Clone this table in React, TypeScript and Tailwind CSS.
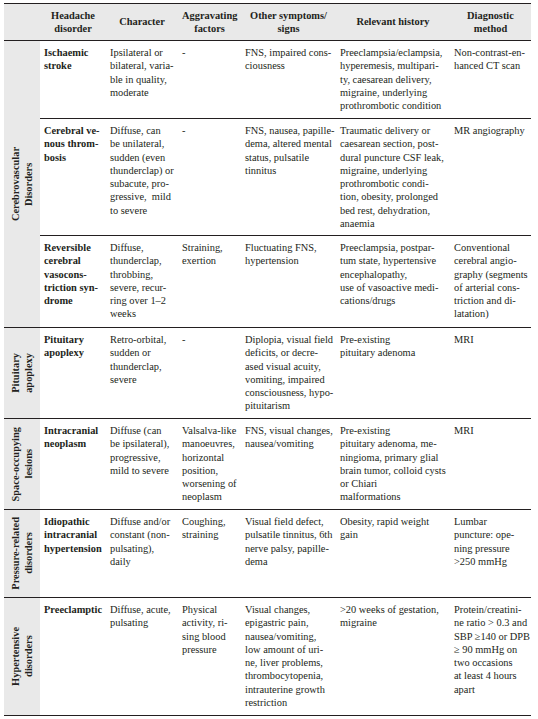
const header: string[][] = [
  ['Headache', 'disorder'],
  ['Character'],
  ['Aggravating', 'factors'],
  ['Other symptoms/', 'signs'],
  ['Relevant history'],
  ['Diagnostic', 'method'],
];

interface Row {
  group?: { label: string[]; span: number };
  h: string;
  last?: boolean;
  cells: string[][];
}

const rows: Row[] = [
  {
    group: { label: ['Cerebrovascular', 'Disorders'], span: 3 },
    h: 'h-[78px]',
    cells: [
      ['Ischaemic', 'stroke'],
      ['Ipsilateral or', 'bilateral, varia-', 'ble in quality,', 'moderate'],
      ['-'],
      ['FNS, impaired cons-', 'ciousness'],
      ['Preeclampsia/eclampsia,', 'hyperemesis, multipari-', 'ty, caesarean delivery,', 'migraine, underlying', 'prothrombotic condition'],
      ['Non-contrast-en-', 'hanced CT scan'],
    ],
  },
  {
    h: 'h-[117px]',
    cells: [
      ['Cerebral ve-', 'nous throm-', 'bosis'],
      ['Diffuse, can', 'be unilateral,', 'sudden (even', 'thunderclap) or', 'subacute, pro-', 'gressive,  mild', 'to severe'],
      ['-'],
      ['FNS, nausea, papille-', 'dema, altered mental', 'status, pulsatile', 'tinnitus'],
      ['Traumatic delivery or', 'caesarean section, post-', 'dural puncture CSF leak,', 'migraine, underlying', 'prothrombotic condi-', 'tion, obesity, prolonged', 'bed rest, dehydration,', 'anaemia'],
      ['MR angiography'],
    ],
  },
  {
    h: 'h-[92px]',
    cells: [
      ['Reversible', 'cerebral', 'vasocons-', 'triction syn-', 'drome'],
      ['Diffuse,', 'thunderclap,', 'throbbing,', 'severe, recur-', 'ring over 1–2', 'weeks'],
      ['Straining,', 'exertion'],
      ['Fluctuating FNS,', 'hypertension'],
      ['Preeclampsia, postpar-', 'tum state, hypertensive', 'encephalopathy,', 'use of vasoactive medi-', 'cations/drugs'],
      ['Conventional', 'cerebral angio-', 'graphy (segments', 'of arterial cons-', 'triction and di-', 'latation)'],
    ],
  },
  {
    group: { label: ['Pituitary', 'apoplexy'], span: 1 },
    h: 'h-[91px]',
    cells: [
      ['Pituitary', 'apoplexy'],
      ['Retro-orbital,', 'sudden or', 'thunderclap,', 'severe'],
      ['-'],
      ['Diplopia, visual field', 'deficits, or decre-', 'ased visual acuity,', 'vomiting, impaired', 'consciousness, hypo-', 'pituitarism'],
      ['Pre-existing', 'pituitary adenoma'],
      ['MRI'],
    ],
  },
  {
    group: { label: ['Space-occupying', 'lesions'], span: 1 },
    h: 'h-[91px]',
    cells: [
      ['Intracranial', 'neoplasm'],
      ['Diffuse (can', 'be ipsilateral),', 'progressive,', 'mild to severe'],
      ['Valsalva-like', 'manoeuvres,', 'horizontal', 'position,', 'worsening of', 'neoplasm'],
      ['FNS, visual changes,', 'nausea/vomiting'],
      ['Pre-existing', 'pituitary adenoma, me-', 'ningioma, primary glial', 'brain tumor, colloid cysts', 'or Chiari', 'malformations'],
      ['MRI'],
    ],
  },
  {
    group: { label: ['Pressure-related', 'disorders'], span: 1 },
    h: 'h-[88px]',
    cells: [
      ['Idiopathic', 'intracranial', 'hypertension'],
      ['Diffuse and/or', 'constant (non-', 'pulsating),', 'daily'],
      ['Coughing,', 'straining'],
      ['Visual field defect,', 'pulsatile tinnitus, 6th', 'nerve palsy, papille-', 'dema'],
      ['Obesity, rapid weight', 'gain'],
      ['Lumbar', 'puncture: ope-', 'ning pressure', '>250 mmHg'],
    ],
  },
  {
    group: { label: ['Hypertensive', 'disorders'], span: 1 },
    h: 'h-[118px]',
    last: true,
    cells: [
      ['Preeclamptic'],
      ['Diffuse, acute,', 'pulsating'],
      ['Physical', 'activity, ri-', 'sing blood', 'pressure'],
      ['Visual changes,', 'epigastric pain,', 'nausea/vomiting,', 'low amount of uri-', 'ne, liver problems,', 'thrombocytopenia,', 'intrauterine growth', 'restriction'],
      ['>20 weeks of gestation,', 'migraine'],
      ['Protein/creatini-', 'ne ratio > 0.3 and', 'SBP ≥140 or DPB', '≥ 90 mmHg on', 'two occasions', 'at least 4 hours', 'apart'],
    ],
  },
];

const Lines = ({ lines }: { lines: string[] }) => (
  <>
    {lines.map((l, i) => (
      <div key={i} className="whitespace-pre">
        {l}
      </div>
    ))}
  </>
);

const App = () => {
  return (
    <div className="min-h-screen bg-white pt-[3px] pl-[4px] font-['Liberation_Serif',serif] text-[10.4px] leading-[13.3px] text-[#231f20]">
      <table className="w-[527px] table-fixed border-collapse">
        <colgroup>
          <col className="w-[36px]" />
          <col className="w-[66px]" />
          <col className="w-[72px]" />
          <col className="w-[63px]" />
          <col className="w-[95px]" />
          <col className="w-[114px]" />
          <col className="w-[81px]" />
        </colgroup>
        <thead>
          <tr className="h-[37px]">
            <th className="border-t border-b border-[#231f20] bg-[#e9e9e9]"></th>
            {header.map((h, i) => (
              <th
                key={i}
                className="border-t border-b border-[#231f20] bg-[#e9e9e9] px-1 text-center align-middle font-bold"
              >
                <Lines lines={h} />
              </th>
            ))}
          </tr>
        </thead>
        <tbody>
          {rows.map((row, ri) => (
            <tr key={ri} className={row.h}>
              {row.group && (
                <td
                  rowSpan={row.group.span}
                  className={`border-t border-[#231f20] bg-[#e9e9e9] text-center align-middle ${row.last ? 'border-b' : ''}`}
                >
                  <div className="inline-block rotate-180 whitespace-nowrap text-center align-middle font-bold [writing-mode:vertical-rl]">
                    {row.group.label.map((l, i) => (
                      <div key={i}>{l}</div>
                    ))}
                  </div>
                </td>
              )}
              {row.cells.map((c, ci) => (
                <td
                  key={ci}
                  className={`border-t border-[#231f20] pt-[5px] pl-1 align-top ${ci === 0 ? 'font-bold' : ''} ${row.last ? 'border-b' : ''}`}
                >
                  <Lines lines={c} />
                </td>
              ))}
            </tr>
          ))}
        </tbody>
      </table>
    </div>
  );
};

export default App;
